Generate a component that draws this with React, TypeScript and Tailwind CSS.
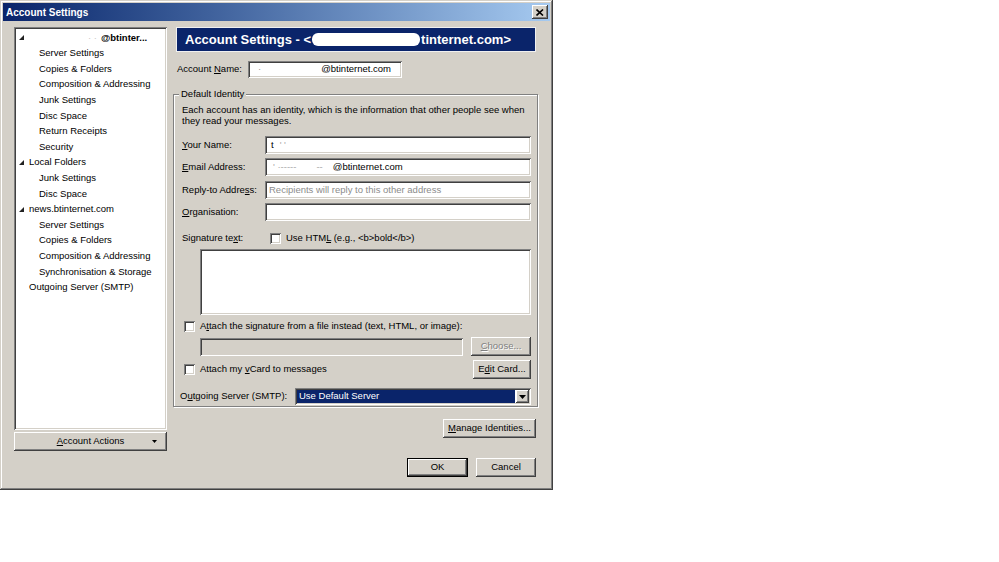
import React from "react";

// classic 3D bevels
const raised =
  "shadow-[inset_-1px_-1px_#404040,inset_1px_1px_#ffffff,inset_-2px_-2px_#808080,inset_2px_2px_#d4d0c8]";
const sunken =
  "shadow-[inset_1px_1px_#808080,inset_-1px_-1px_#ffffff,inset_2px_2px_#404040,inset_-2px_-2px_#d4d0c8]";

function U({ children }: { children: React.ReactNode }) {
  return <span className="underline underline-offset-[1px]">{children}</span>;
}

function Check() {
  return <span className={`inline-block h-[11px] w-[11px] shrink-0 bg-white ${sunken}`} />;
}

function Button({ children, className = "", def = false }: { children: React.ReactNode; className?: string; def?: boolean }) {
  return (
    <div
      className={`flex h-[19px] items-center justify-center bg-[#d4d0c8] ${
        def ? "outline outline-1 outline-[#000000] -outline-offset-1 shadow-[inset_-2px_-2px_#404040,inset_2px_2px_#ffffff,inset_-3px_-3px_#808080]" : raised
      } ${className}`}
    >
      {children}
    </div>
  );
}

function Field({ children, className = "", disabled = false }: { children?: React.ReactNode; className?: string; disabled?: boolean }) {
  return (
    <div className={`flex items-center px-[4px] ${disabled ? "bg-[#d4d0c8]" : "bg-white"} ${sunken} ${className}`}>
      {children}
    </div>
  );
}

function Twisty() {
  return (
    <svg width="5" height="5" viewBox="0 0 5 5" className="shrink-0">
      <polygon points="5,0 5,5 0,5" fill="#222" />
    </svg>
  );
}

const tree: { label: string; level: 0 | 1; open?: boolean }[] = [
  { label: "Server Settings", level: 1 },
  { label: "Copies & Folders", level: 1 },
  { label: "Composition & Addressing", level: 1 },
  { label: "Junk Settings", level: 1 },
  { label: "Disc Space", level: 1 },
  { label: "Return Receipts", level: 1 },
  { label: "Security", level: 1 },
  { label: "Local Folders", level: 0, open: true },
  { label: "Junk Settings", level: 1 },
  { label: "Disc Space", level: 1 },
  { label: "news.btinternet.com", level: 0, open: true },
  { label: "Server Settings", level: 1 },
  { label: "Copies & Folders", level: 1 },
  { label: "Composition & Addressing", level: 1 },
  { label: "Synchronisation & Storage", level: 1 },
  { label: "Outgoing Server (SMTP)", level: 0 },
];

export default function App() {
  return (
    <div className="min-h-screen bg-white font-['Liberation_Sans',Arial,sans-serif] text-[9.5px] text-black">
      <div className="flex h-[490px] w-[553px] flex-col bg-[#d4d0c8] shadow-[inset_-1px_-1px_#404040,inset_1px_1px_#d4d0c8,inset_-2px_-2px_#808080,inset_2px_2px_#ffffff]">
        {/* title bar */}
        <div className="mx-[3px] mt-[3px] flex h-[18px] items-center justify-between bg-gradient-to-r from-[#0a246a] to-[#a6caf0] pl-[3px] pr-[2px]">
          <span className="text-[10px] font-bold text-white">Account Settings</span>
          <div className={`flex h-[14px] w-[16px] items-center justify-center bg-[#d4d0c8] ${raised}`}>
            <svg width="8" height="7" viewBox="0 0 8 7">
              <path d="M0.5 0.5 L7 6.5 M7 0.5 L0.5 6.5" stroke="#000" strokeWidth="1.6" />
            </svg>
          </div>
        </div>

        <div className="flex pl-[14px] pt-[6px]">
          {/* account tree */}
          <div className="flex w-[153px] flex-col">
            <div className={`h-[403px] bg-white px-[2px] pt-[3px] ${sunken}`}>
              <div className="flex h-[15.6px] items-center pl-[3px]">
                <Twisty />
                <span className="ml-[4px] flex items-center">
                  <span className="inline-block w-[60px]" />
                  <span className="mr-[4px] text-[#c8c8c8]">· ·</span>
                  <span className="font-bold">@btinter...</span>
                </span>
              </div>
              {tree.map((t, i) => (
                <div key={i} className={`flex h-[15.6px] items-center ${t.level === 0 ? "pl-[3px]" : "pl-[23px]"}`}>
                  {t.level === 0 && (t.open ? <Twisty /> : <span className="inline-block w-[5px]" />)}
                  <span className={t.level === 0 ? "ml-[5px]" : ""}>{t.label}</span>
                </div>
              ))}
            </div>
            <Button className="relative mt-[2px]">
              <span>
                <U>A</U>ccount Actions
              </span>
              <svg width="5" height="3" viewBox="0 0 5 3" className="absolute right-[10px] top-[8px]">
                <polygon points="0,0 5,0 2.5,3" fill="#000" />
              </svg>
            </Button>
          </div>

          {/* settings page */}
          <div className="ml-[6px] flex w-[365px] flex-col">
            <div className="ml-[3px] flex h-[25px] w-[360px] items-center border border-[#f0f0f0] bg-[#0a246a] pl-[8px] text-[13px] font-bold text-white">
              <span>Account Settings - &lt;</span>
              <span className="mx-[1px] inline-block h-[13px] w-[108px] rounded-[6px] bg-white" />
              <span>tinternet.com&gt;</span>
            </div>

            <div className="mt-[9px] flex h-[17px] items-center">
              <span className="w-[75px] pl-[4px]">
                Account <U>N</U>ame:
              </span>
              <Field className="h-[17px] w-[154px]">
                <span className="ml-[6px] text-[#999]">·</span>
                <span className="ml-[60px]">@btinternet.com</span>
              </Field>
            </div>

            {/* Default Identity group */}
            <div className="relative mt-[16px] h-[313px] border border-[#808080] pl-[8px] pr-[6px] pt-[9px] shadow-[inset_1px_1px_#ffffff,1px_1px_#ffffff]">
              <span className="absolute left-[5px] top-[-7px] bg-[#d4d0c8] px-[2px] leading-[12px]">Default Identity</span>
              <p className="leading-[11px]">
                Each account has an identity, which is the information that other people see when
                <br />
                they read your messages.
              </p>

              <div className="mt-[10px] flex h-[18px] items-center">
                <span className="w-[83px]">
                  <U>Y</U>our Name:
                </span>
                <Field className="h-[18px] flex-1">
                  <span className="ml-[2px]">t</span>
                  <span className="ml-[6px] text-[#aaa]">' '</span>
                </Field>
              </div>
              <div className="mt-[4px] flex h-[18px] items-center">
                <span className="w-[83px]">
                  <U>E</U>mail Address:
                </span>
                <Field className="h-[18px] flex-1">
                  <span className="ml-[4px] text-[#aaa]">' ·-----</span>
                  <span className="ml-[20px] text-[#aaa]">--</span>
                  <span className="ml-[10px]">@btinternet.com</span>
                </Field>
              </div>
              <div className="mt-[5px] flex h-[18px] items-center">
                <span className="w-[83px]">
                  Reply-to Addre<U>s</U>s:
                </span>
                <Field className="h-[18px] flex-1">
                  <span className="text-[#8c8c8c]">Recipients will reply to this other address</span>
                </Field>
              </div>
              <div className="mt-[4px] flex h-[18px] items-center">
                <span className="w-[83px]">
                  <U>O</U>rganisation:
                </span>
                <Field className="h-[18px] flex-1" />
              </div>

              <div className="mt-[10px] flex h-[14px] items-center">
                <span className="w-[88px]">
                  Signature te<U>x</U>t:
                </span>
                <Check />
                <span className="ml-[5px]">
                  Use HTM<U>L</U> (e.g., &lt;b&gt;bold&lt;/b&gt;)
                </span>
              </div>
              <div className={`ml-[18px] mt-[4px] h-[66px] bg-white ${sunken}`} />

              <div className="mt-[4px] flex h-[14px] items-center pl-[2px]">
                <Check />
                <span className="ml-[5px]">
                  A<U>t</U>tach the signature from a file instead (text, HTML, or image):
                </span>
              </div>
              <div className="mt-[4px] flex h-[19px] items-center">
                <Field disabled className="ml-[18px] h-[18px] w-[263px]" />
                <Button className="ml-auto w-[60px] text-[#808080] [text-shadow:1px_1px_0_#ffffff]">
                  <span>
                    <U>C</U>hoose...
                  </span>
                </Button>
              </div>
              <div className="mt-[4px] flex h-[19px] items-center pl-[2px]">
                <Check />
                <span className="ml-[5px]">
                  Attach my <U>v</U>Card to messages
                </span>
                <Button className="ml-auto w-[58px]">
                  <span>
                    E<U>d</U>it Card...
                  </span>
                </Button>
              </div>
              <div className="mt-[9px] flex h-[17px] items-center">
                <span className="ml-[-2px] w-[115px]">
                  O<U>u</U>tgoing Server (SMTP):
                </span>
                <div className={`flex h-[17px] flex-1 items-center bg-white p-[2px] ${sunken}`}>
                  <div className="flex h-full flex-1 items-center bg-[#0a246a] pl-[2px] text-white">Use Default Server</div>
                  <div className={`ml-[1px] flex h-full w-[13px] items-center justify-center bg-[#d4d0c8] ${raised}`}>
                    <svg width="7" height="4" viewBox="0 0 7 4">
                      <polygon points="0,0 7,0 3.5,4" fill="#000" />
                    </svg>
                  </div>
                </div>
              </div>
            </div>

            <div className="mt-[12px] flex h-[19px] justify-end pr-[2px]">
              <Button className="w-[93px]">
                <span>
                  <U>M</U>anage Identities...
                </span>
              </Button>
            </div>
            <div className="mt-[20px] flex h-[19px] justify-end gap-[8px] pr-[2px]">
              <Button def className="w-[61px]">
                OK
              </Button>
              <Button className="w-[60px]">Cancel</Button>
            </div>
          </div>
        </div>
      </div>
    </div>
  );
}
